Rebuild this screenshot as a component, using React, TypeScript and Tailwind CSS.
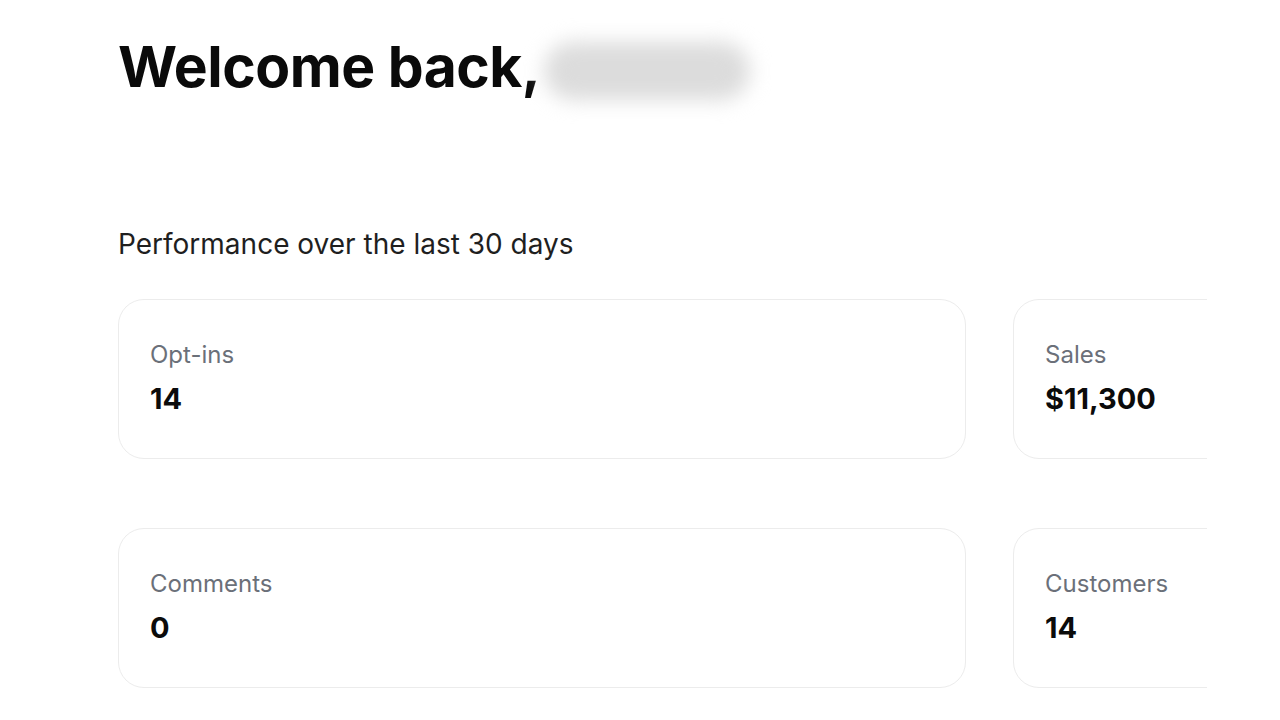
const STATS = [
  { label: 'Opt-ins', value: '14' },
  { label: 'Sales', value: '$11,300' },
  { label: 'Comments', value: '0' },
  { label: 'Customers', value: '14' },
]

function StatCard({ label, value }: { label: string; value: string }) {
  return (
    <div className="h-[160px] rounded-[26px] border border-[#ececec] bg-white px-[31px] pt-[39px]">
      <p className="text-[24px] leading-[32px] text-[#6b7079]">{label}</p>
      <p className="mt-[11px] text-[29px] font-bold leading-[34px] text-[#0b0b0b]">{value}</p>
    </div>
  )
}

export default function App() {
  return (
    <div className="min-h-screen bg-white pl-[118px] font-['Inter',sans-serif]">
      {/* Greeting */}
      <div className="flex items-center gap-[4px] pt-[31px]">
        <h1 className="text-[57px] font-bold leading-[72px] tracking-[-0.5px] text-[#0a0a0a]">
          Welcome back,
        </h1>
        <div className="mt-[8px] h-[58px] w-[206px] rounded-full bg-[#dcdcdc] blur-[10px]" />
      </div>

      <p className="mt-[123px] text-[28px] leading-[36px] text-[#1f1f1f]">
        Performance over the last 30 days
      </p>

      {/* Stat cards */}
      <div className="mt-[37px] w-[1089px] overflow-hidden">
        <div className="grid w-[1743px] grid-cols-[848px_848px] gap-x-[47px] gap-y-[69px]">
          {STATS.map(s => (
            <StatCard key={s.label} label={s.label} value={s.value} />
          ))}
        </div>
      </div>
    </div>
  )
}
